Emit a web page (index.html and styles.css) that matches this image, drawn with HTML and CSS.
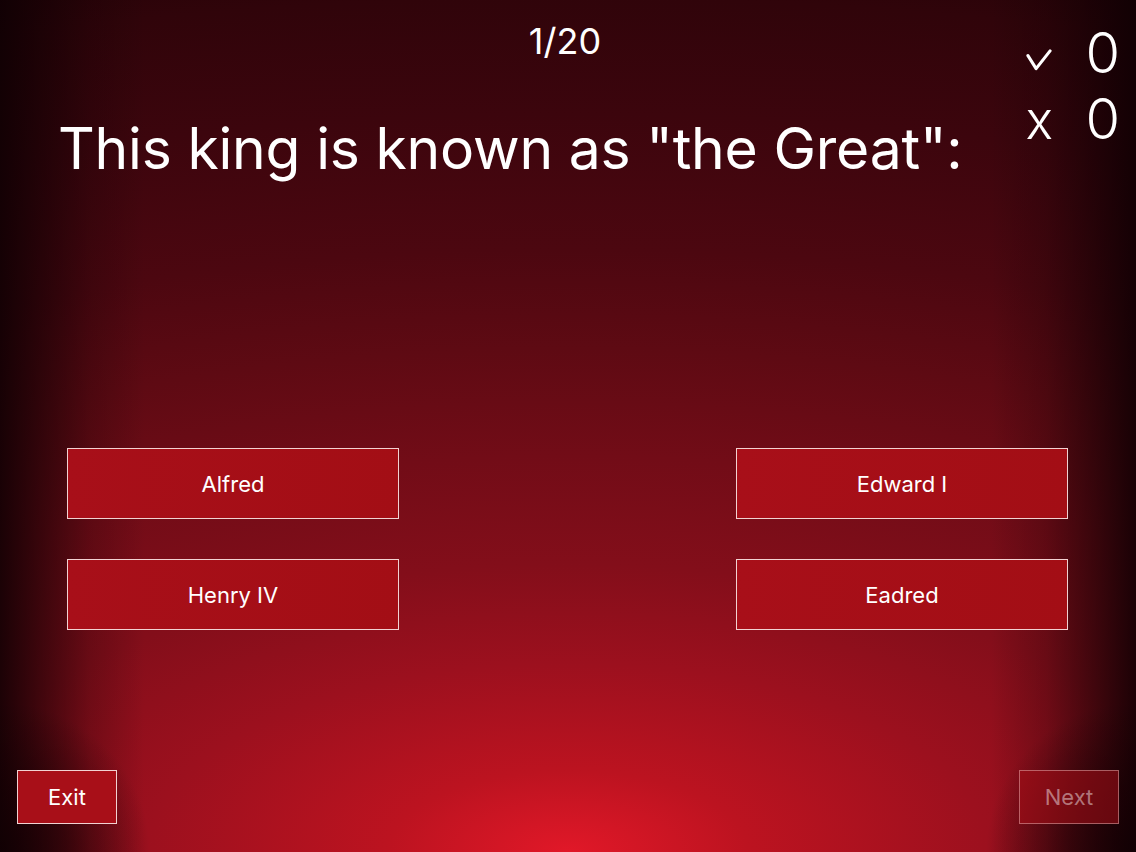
FILE: index.html
```html
<!DOCTYPE html>
<html lang="en">
<head>
<meta charset="utf-8">
<title>Quiz</title>
<link rel="stylesheet" href="styles.css">
</head>
<body>
<div class="screen">
  <header class="top">
    <div class="counter">1/20</div>
    <div class="score">
      <div class="score-row">
        <span class="mark"><svg class="tick" width="27" height="22" viewBox="0 0 27 22" aria-label="correct"><path d="M2 6.5 L10.5 20 L25 1.5" fill="none" stroke="#fff" stroke-width="3.2" stroke-linecap="round" stroke-linejoin="round"/></svg></span>
        <span class="num">0</span>
      </div>
      <div class="score-row">
        <span class="mark x">x</span>
        <span class="num">0</span>
      </div>
    </div>
    <h1 class="question">This king is known as "the Great":</h1>
  </header>
  <section class="answers">
    <button class="answer">Alfred</button>
    <button class="answer">Edward I</button>
    <button class="answer">Henry IV</button>
    <button class="answer">Eadred</button>
  </section>
  <footer class="bottom">
    <button class="nav">Exit</button>
    <button class="nav disabled">Next</button>
  </footer>
</div>
</body>
</html>
```
FILE: styles.css
```css
html, body {
  margin: 0;
  padding: 0;
  height: 100%;
}
body {
  font-family: Inter, "Noto Sans", "Liberation Sans", sans-serif;
  color: #fff;
  background: #1c0205;
  overflow: hidden;
}
.screen {
  height: 852px;
  display: flex;
  flex-direction: column;
  background:
    radial-gradient(circle 150px at 0 100%, rgba(14, 0, 3, 0.8) 0%, rgba(14, 0, 3, 0.5) 45%, rgba(14, 0, 3, 0) 100%),
    radial-gradient(circle 150px at 100% 100%, rgba(14, 0, 3, 0.8) 0%, rgba(14, 0, 3, 0.5) 45%, rgba(14, 0, 3, 0) 100%),
    linear-gradient(90deg,
      rgba(14, 0, 3, 0.88) 0px,
      rgba(14, 0, 3, 0.58) 40px,
      rgba(14, 0, 3, 0.22) 90px,
      rgba(14, 0, 3, 0) 145px,
      rgba(14, 0, 3, 0) calc(100% - 145px),
      rgba(14, 0, 3, 0.22) calc(100% - 90px),
      rgba(14, 0, 3, 0.58) calc(100% - 40px),
      rgba(14, 0, 3, 0.88) 100%),
    radial-gradient(ellipse 2000px 900px at 50% 100%,
      #e11828 0%,
      #bc1320 9%,
      #9c101e 21%,
      #830e1a 32%,
      #720c17 44%,
      #5e0a13 56%,
      #4c0710 67%,
      #3c050d 82%,
      #30040a 95%,
      #280308 100%);
}
.top {
  display: grid;
  grid-template-columns: 1fr auto;
  grid-template-rows: auto auto;
  padding: 0 16px 0 58px;
}
.counter {
  grid-column: 1 / -1;
  grid-row: 1;
  justify-self: center;
  font-size: 36px;
  line-height: 1;
  padding-top: 23px;
  margin-left: -48px;
  font-weight: 400;
}
.score {
  grid-column: 2;
  grid-row: 1 / 3;
  padding-top: 20px;
}
.score-row {
  display: flex;
  align-items: baseline;
  gap: 33px;
  font-size: 56px;
  line-height: 66px;
  font-weight: 300;
}
.mark {
  width: 26px;
  display: flex;
  justify-content: center;
}
.tick {
  display: block;
}
.score-row:first-child .mark {
  align-self: center;
  margin-top: 14px;
}
.mark.x {
  font-size: 52px;
  font-weight: 300;
}
.question {
  grid-column: 1;
  grid-row: 2;
  margin: 0;
  font-size: 57px;
  line-height: 1;
  font-weight: 400;
  padding-top: 61px;
  letter-spacing: -0.2px;
}
.answers {
  display: grid;
  grid-template-columns: 332px 332px;
  justify-content: space-between;
  row-gap: 40px;
  padding: 0 68px 0 67px;
  margin-top: 271px;
}
.answer {
  height: 71px;
  background: linear-gradient(90deg, #a80f19, #a30e15);
  border: 1px solid #f2d2d2;
  color: #fff;
  font-family: inherit;
  font-size: 22px;
  font-weight: 400;
  padding: 0;
}
.bottom {
  margin-top: auto;
  display: flex;
  justify-content: space-between;
  padding: 0 17px 28px 17px;
}
.nav {
  width: 100px;
  height: 54px;
  background: #a80f18;
  border: 1px solid #f2d2d2;
  color: #fff;
  font-family: inherit;
  font-size: 22px;
  padding: 0;
}
.nav.disabled {
  background: rgba(168, 15, 24, 0.55);
  border-color: rgba(242, 200, 200, 0.45);
  color: rgba(255, 255, 255, 0.45);
}
```
